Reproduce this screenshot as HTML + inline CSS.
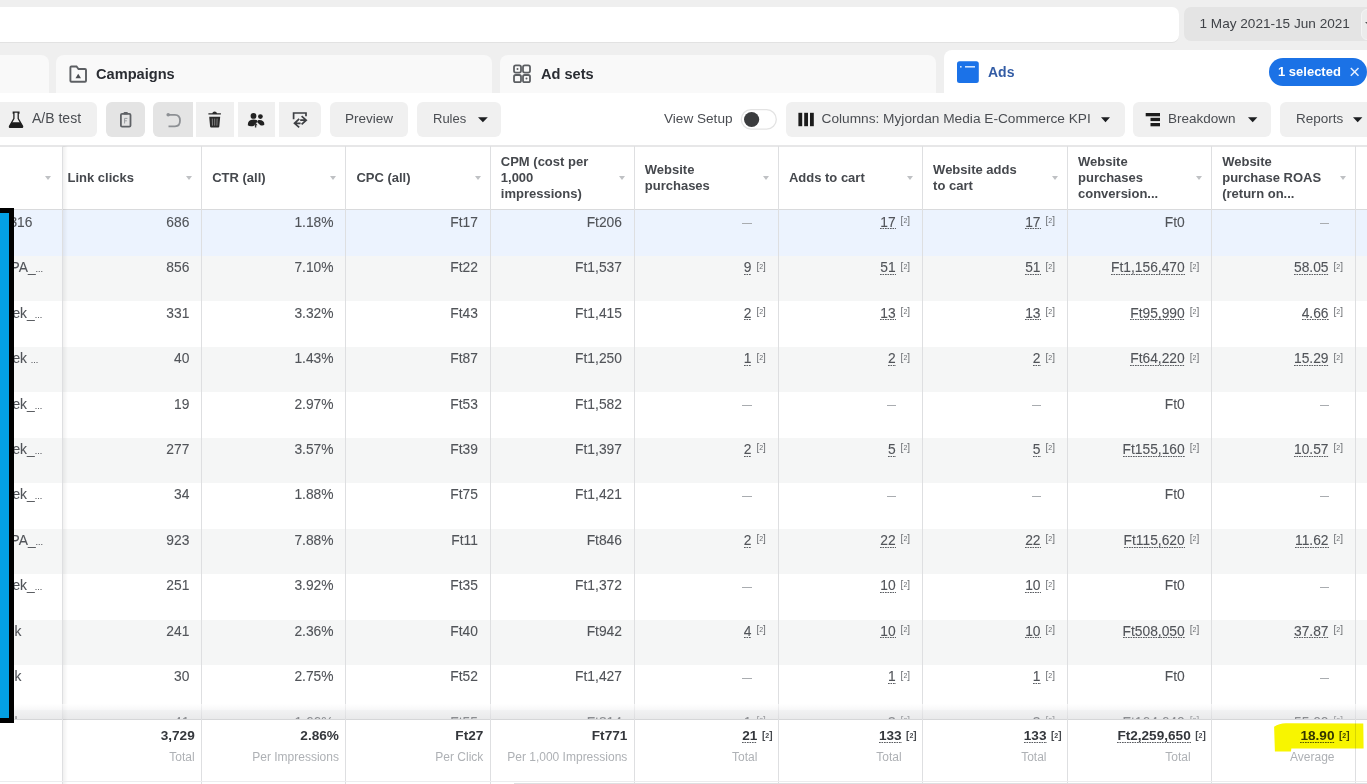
<!DOCTYPE html>
<html><head><meta charset="utf-8">
<style>
*{margin:0;padding:0;box-sizing:border-box}
html,body{width:1367px;height:784px;overflow:hidden;background:#fff;}
body{filter:blur(0.35px);font-family:"Liberation Sans",sans-serif;color:#444950}
.a{position:absolute}
#topbg{left:0;top:0;width:1367px;height:54px;background:#efefef}
#search{left:-10px;top:7px;width:1188.5px;height:35px;background:#fff;border-radius:7px;box-shadow:0 1px 0 #e2e2e2}
#date{left:1184px;top:7.3px;width:200px;height:34.2px;background:#e4e4e4;border-radius:7px;font-size:13.6px;color:#404348;padding:8.5px 0 0 15.5px;white-space:nowrap}
.tab{top:54.5px;height:38.5px;background:#f9f9f9;border-radius:8px 8px 0 0;font-size:14.6px;font-weight:bold;color:#2a2d33}
#tab0{left:-10px;width:59px}
#tab1{left:56px;width:436px}
#tab2{left:500px;width:436px}
#tab3{left:944px;top:50px;width:430px;height:46px;background:#fff}
#toolbar{left:0;top:93px;width:1367px;height:53px;background:#fff}
.btn{top:102px;height:35px;background:#f0f0f0;border-radius:6px;font-size:13.5px;color:#4a4d52;white-space:nowrap}
.btn span{position:absolute;top:9px}
.hd{position:absolute;font-size:13px;font-weight:bold;color:#45484d;line-height:16px;white-space:nowrap}
.rowbg{position:absolute;left:0;width:1367px}
.c small{font-size:9px}
.c{position:absolute;font-size:13.8px;color:#515459;white-space:nowrap;line-height:16px;-webkit-text-stroke:0.1px #515459}
.u{background-image:linear-gradient(to right,#5a5d62 60%,transparent 60%);background-size:2.5px 1.3px;background-repeat:repeat-x;background-position:0 13.7px}
.sup{position:absolute;font-size:10px;color:#6a6d71;line-height:10px;white-space:nowrap}
.sup small{font-size:7px;vertical-align:1px}
.dash{position:absolute;width:9.5px;height:1px;background:#a9acb0}
.vl{position:absolute;width:1px;background:#dedfe1}
.caret{position:absolute;width:0;height:0;border-left:3.5px solid transparent;border-right:3.5px solid transparent;border-top:4.5px solid #bfc1c4}
.dcaret{position:absolute;width:0;height:0;border-left:5px solid transparent;border-right:5px solid transparent;border-top:5px solid #1c1e21}
.ft{position:absolute;font-size:13.6px;font-weight:bold;color:#34373c;white-space:nowrap;line-height:16px}
.fl{position:absolute;font-size:12px;color:#aeb1b5;white-space:nowrap;line-height:14px}
</style></head><body>
<div class="a" id="topbg" style="height:93px"></div>
<div class="a" id="search"></div>
<div class="a" id="date">1 May 2021-15 Jun 2021</div>
<div class="a" style="left:1360.5px;top:9px;width:20px;height:31px;background:#ececec;border-radius:6px;border:1px solid #f4f4f4"></div>
<div class="a" style="left:1364.5px;top:22px;width:0;height:0;border-left:4px solid transparent;border-right:4px solid transparent;border-top:4px solid #555"></div>
<div class="a tab" id="tab0"></div>
<div class="a tab" id="tab1"><span class="a" style="left:40px;top:11px">Campaigns</span></div>
<div class="a tab" id="tab2"><span class="a" style="left:41px;top:11px">Ad sets</span></div>
<div class="a tab" id="tab3"><span class="a" style="left:44px;top:13.5px;color:#335ca5;font-size:14px">Ads</span></div>
<div class="a" style="left:1269.4px;top:58.4px;width:97.4px;height:27.4px;background:#1b72e6;border-radius:14px;color:#fff;font-size:13px;font-weight:bold;padding:5.3px 0 0 8.6px;white-space:nowrap">1 selected</div>
<div class="a" id="toolbar"></div>
<div class="a btn" style="left:-10px;width:107px"><span style="left:42px;font-size:14px;top:8.3px">A/B test</span></div>
<div class="a btn" style="left:106px;width:39px;background:#e4e4e4"></div>
<div class="a btn" style="left:153px;width:40px;background:#e4e4e4;border-radius:6px 0 0 6px"></div>
<div class="a btn" style="left:196px;width:38px;border-radius:0"></div>
<div class="a btn" style="left:238px;width:37px;border-radius:0"></div>
<div class="a btn" style="left:279px;width:42px;border-radius:0 6px 6px 0"></div>
<div class="a btn" style="left:330px;width:78px"><span style="left:15px">Preview</span></div>
<div class="a btn" style="left:417px;width:84px"><span style="left:16px;font-size:13px">Rules</span></div>
<div class="a" style="left:664px;top:111px;font-size:13.6px;color:#4a4d52;white-space:nowrap">View Setup</div>
<div class="a btn" style="left:786px;width:339px"><span style="left:35.5px;font-size:13.7px">Columns: Myjordan Media E-Commerce KPI</span></div>
<div class="a btn" style="left:1133px;width:138px"><span style="left:35px">Breakdown</span></div>
<div class="a btn" style="left:1280px;width:100px"><span style="left:16px">Reports</span></div>

<svg class="a" style="left:0;top:0" width="1367" height="146" viewBox="0 0 1367 146">
 <!-- campaigns folder -->
 <path d="M70.4 67.5 Q70.4 66.5 71.4 66.5 L76.5 66.5 L78.5 69 L85 69 Q86 69 86 70 L86 80.7 Q86 81.7 85 81.7 L71.4 81.7 Q70.4 81.7 70.4 80.7 Z" fill="none" stroke="#5c5f63" stroke-width="1.9"/>
 <path d="M75.5 78.3 L78.2 73.8 L81 78.3 Z" fill="#4a4d51"/>
 <!-- ad sets grid -->
 <rect x="514" y="65.4" width="7" height="7.2" rx="1.8" fill="none" stroke="#5c5f63" stroke-width="1.8"/>
 <rect x="523" y="65.4" width="7" height="7.2" rx="1.8" fill="none" stroke="#5c5f63" stroke-width="1.8"/>
 <rect x="514" y="75" width="7" height="7.2" rx="1.8" fill="none" stroke="#5c5f63" stroke-width="1.8"/>
 <rect x="523" y="75" width="7" height="7.2" rx="1.8" fill="none" stroke="#5c5f63" stroke-width="1.8"/>
 <circle cx="517.5" cy="69" r="1" fill="#5c5f63"/>
 <circle cx="526.5" cy="78.6" r="1" fill="#5c5f63"/>
 <!-- ads icon -->
 <rect x="957" y="61.2" width="21.8" height="21.8" rx="2.5" fill="#1b72e8"/>
 <rect x="960" y="66" width="1.6" height="1.6" fill="#cfe3ff"/>
 <rect x="965" y="66" width="10" height="1.6" fill="#cfe3ff"/>
 <!-- pill X -->
 <path d="M1350.8 68 L1358.5 75.7 M1358.5 68 L1350.8 75.7" stroke="#e3eeff" stroke-width="1.5"/>
 <!-- flask -->
 <path d="M13.3 112.2 L18.9 112.2 L18.9 113.2 L18.2 113.2 L18.2 118.5 L22.6 126.3 Q22.8 127.4 21.8 127.4 L10.2 127.4 Q9.2 127.4 9.5 126.3 L13.9 118.5 L13.9 113.2 L13.3 113.2 Z" fill="none" stroke="#222" stroke-width="1.3"/>
 <path d="M11.7 122.2 L20.4 122.2 L22.6 126.3 Q22.8 127.4 21.8 127.4 L10.2 127.4 Q9.2 127.4 9.5 126.3 Z" fill="#1e1e1e"/>
 <!-- clipboard -->
 <rect x="120.9" y="113.8" width="9.6" height="12.8" rx="1.2" fill="none" stroke="#5f6266" stroke-width="1.8"/>
 <rect x="123.6" y="112" width="4.2" height="2.6" rx="0.8" fill="#5f6266"/>
 <path d="M124.6 123.5 L124.6 118.4 L127.4 118.4 M124.6 120.8 L126.8 120.8" fill="none" stroke="#9a9da1" stroke-width="1"/>
 <!-- undo -->
 <path d="M168 114.8 L175 114.8 Q180 114.8 180 120.6 Q180 126.4 175 126.4 L168.5 126.4" fill="none" stroke="#8d9094" stroke-width="1.8"/>
 <circle cx="168.2" cy="114.8" r="1.8" fill="#8d9094"/>
 <!-- trash -->
 <path d="M208.4 113.2 L220.9 113.2 L220.9 114.6 L208.4 114.6 Z M212.3 113.2 Q212.6 111.6 214.6 111.6 Q216.6 111.6 217 113.2 Z" fill="#2a2a2a"/>
 <path d="M209.2 116.8 L220.2 116.8 L219.3 126.4 Q219.2 127.4 218.2 127.4 L211.2 127.4 Q210.2 127.4 210.1 126.4 Z" fill="#2a2a2a"/>
 <path d="M212.3 118.6 L212.5 125.6 M214.7 118.6 L214.7 125.6 M217.1 118.6 L216.9 125.6" stroke="#8a8a8a" stroke-width="0.9"/>
 <!-- group -->
 <circle cx="253.5" cy="115.9" r="2.9" fill="#222"/>
 <circle cx="260.4" cy="116.6" r="2.4" fill="#222"/>
 <path d="M247.8 125.2 Q247.6 119.8 253.4 119.6 Q257.2 119.8 257.9 121.4 L255.6 123.6 L253.6 126 Q249.6 127 247.8 125.2 Z" fill="#222"/>
 <path d="M258.3 120.1 Q264.3 119.6 264.4 124.6 Q263.6 126 260.4 125.3 L257.4 122.4 Z" fill="#222"/>
 <path d="M255.6 122.4 L257.5 125.2 L256.3 125.2 L256.3 127.6 L254.9 127.6 L254.9 125.2 L253.7 125.2 Z" fill="#333"/>
 <!-- share swap -->
 <path d="M293.6 119.2 L293.6 113 L306 113 L306 116.2" fill="none" stroke="#3d3f43" stroke-width="1.7"/>
 <path d="M299.2 118.8 L294.5 123.3 L299.2 127.3 M294.8 123.3 L300.6 123.3" fill="none" stroke="#3d3f43" stroke-width="1.7"/>
 <path d="M301.6 116.2 L306.2 120.2 L301.6 124.4 M305.8 120.2 L300.2 120.2" fill="none" stroke="#3d3f43" stroke-width="1.7"/>
 <!-- rules caret -->
 <path d="M478 117.3 L487.8 117.3 L482.9 122.3 Z" fill="#1c1e21"/>
 <!-- toggle -->
 <rect x="741.3" y="109.7" width="35" height="19.4" rx="9.7" fill="#fff" stroke="#e3e3e3" stroke-width="1.3"/>
 <circle cx="751.6" cy="119.5" r="7.6" fill="#3b3c3e"/>
 <!-- columns icon -->
 <rect x="798.4" y="112.8" width="3.8" height="13.4" fill="#1c1c1c"/>
 <rect x="804.2" y="112.8" width="3.8" height="13.4" fill="#1c1c1c"/>
 <rect x="810" y="112.8" width="3.8" height="13.4" fill="#1c1c1c"/>
 <path d="M1101 117.3 L1110 117.3 L1105.5 122.3 Z" fill="#1c1e21"/>
 <!-- breakdown icon -->
 <rect x="1145.7" y="113" width="14.3" height="3.3" fill="#1c1c1c"/>
 <rect x="1150.5" y="117.8" width="9.5" height="3.3" fill="#1c1c1c"/>
 <rect x="1150.5" y="123" width="9.5" height="3.3" fill="#1c1c1c"/>
 <path d="M1248 117.3 L1257.4 117.3 L1252.7 122.3 Z" fill="#1c1e21"/>
 <path d="M1353 117.3 L1362.4 117.3 L1357.7 122.3 Z" fill="#1c1e21"/>
</svg>
<svg class="a" style="left:0;top:140px" width="1367" height="60" viewBox="0 140 1367 60">
 <circle cx="1370.5" cy="176.3" r="5.6" fill="#4a7fb8"/>
</svg>

<div class="a" style="left:0;top:145.7px;width:1367px;height:638.3px;background:#fff"></div>
<div class="rowbg" style="top:208.9px;height:47.2px;background:#ecf3fe"></div>
<div class="rowbg" style="top:255.9px;height:45.8px;background:#f5f6f6"></div>
<div class="rowbg" style="top:301.3px;height:45.8px;background:#ffffff"></div>
<div class="rowbg" style="top:346.8px;height:45.8px;background:#f5f6f6"></div>
<div class="rowbg" style="top:392.2px;height:45.8px;background:#ffffff"></div>
<div class="rowbg" style="top:437.6px;height:45.8px;background:#f5f6f6"></div>
<div class="rowbg" style="top:483.1px;height:45.8px;background:#ffffff"></div>
<div class="rowbg" style="top:528.6px;height:45.8px;background:#f5f6f6"></div>
<div class="rowbg" style="top:574.0px;height:45.8px;background:#ffffff"></div>
<div class="rowbg" style="top:619.5px;height:45.8px;background:#f5f6f6"></div>
<div class="rowbg" style="top:664.9px;height:45.8px;background:#ffffff"></div>
<div class="rowbg" style="top:710.4px;height:45.8px;background:#f5f6f6"></div>
<div class="a" style="left:0;top:144.7px;width:1367px;height:2px;background:#e7e7e8"></div>
<div class="a" style="left:0;top:208.6px;width:1367px;height:1.6px;background:#d9dadc"></div>
<div class="c" style="left:9.4px;top:214.7px">316</div>
<div class="c" style="right:1177.7px;top:214.7px">686</div>
<div class="c" style="right:1033.5px;top:214.7px">1.18%</div>
<div class="c" style="right:889.1px;top:214.7px">Ft17</div>
<div class="c" style="right:745.1px;top:214.7px">Ft206</div>
<div class="dash" style="left:742.4px;top:223px"></div>
<div class="c u" style="right:471.4px;top:214.7px">17</div><div class="sup" style="left:900.6px;top:216.2px">[<small>2</small>]</div>
<div class="c u" style="right:326.5px;top:214.7px">17</div><div class="sup" style="left:1045.5px;top:216.2px">[<small>2</small>]</div>
<div class="c" style="right:182.3px;top:214.7px">Ft0</div>
<div class="dash" style="left:1319.5px;top:223px"></div>
<div class="c" style="left:10.5px;top:260.2px">PA_<small>...</small></div>
<div class="c" style="right:1177.7px;top:260.2px">856</div>
<div class="c" style="right:1033.5px;top:260.2px">7.10%</div>
<div class="c" style="right:889.1px;top:260.2px">Ft22</div>
<div class="c" style="right:745.1px;top:260.2px">Ft1,537</div>
<div class="c u" style="right:615.6px;top:260.2px">9</div><div class="sup" style="left:756.4px;top:261.7px">[<small>2</small>]</div>
<div class="c u" style="right:471.4px;top:260.2px">51</div><div class="sup" style="left:900.6px;top:261.7px">[<small>2</small>]</div>
<div class="c u" style="right:326.5px;top:260.2px">51</div><div class="sup" style="left:1045.5px;top:261.7px">[<small>2</small>]</div>
<div class="c u" style="right:182.3px;top:260.2px">Ft1,156,470</div><div class="sup" style="left:1189.7px;top:261.7px">[<small>2</small>]</div>
<div class="c u" style="right:38.5px;top:260.2px">58.05</div><div class="sup" style="left:1333.5px;top:261.7px">[<small>2</small>]</div>
<div class="c" style="left:12.4px;top:305.6px">ek_<small>...</small></div>
<div class="c" style="right:1177.7px;top:305.6px">331</div>
<div class="c" style="right:1033.5px;top:305.6px">3.32%</div>
<div class="c" style="right:889.1px;top:305.6px">Ft43</div>
<div class="c" style="right:745.1px;top:305.6px">Ft1,415</div>
<div class="c u" style="right:615.6px;top:305.6px">2</div><div class="sup" style="left:756.4px;top:307.1px">[<small>2</small>]</div>
<div class="c u" style="right:471.4px;top:305.6px">13</div><div class="sup" style="left:900.6px;top:307.1px">[<small>2</small>]</div>
<div class="c u" style="right:326.5px;top:305.6px">13</div><div class="sup" style="left:1045.5px;top:307.1px">[<small>2</small>]</div>
<div class="c u" style="right:182.3px;top:305.6px">Ft95,990</div><div class="sup" style="left:1189.7px;top:307.1px">[<small>2</small>]</div>
<div class="c u" style="right:38.5px;top:305.6px">4.66</div><div class="sup" style="left:1333.5px;top:307.1px">[<small>2</small>]</div>
<div class="c" style="left:12.4px;top:351.1px">ek <small>...</small></div>
<div class="c" style="right:1177.7px;top:351.1px">40</div>
<div class="c" style="right:1033.5px;top:351.1px">1.43%</div>
<div class="c" style="right:889.1px;top:351.1px">Ft87</div>
<div class="c" style="right:745.1px;top:351.1px">Ft1,250</div>
<div class="c u" style="right:615.6px;top:351.1px">1</div><div class="sup" style="left:756.4px;top:352.6px">[<small>2</small>]</div>
<div class="c u" style="right:471.4px;top:351.1px">2</div><div class="sup" style="left:900.6px;top:352.6px">[<small>2</small>]</div>
<div class="c u" style="right:326.5px;top:351.1px">2</div><div class="sup" style="left:1045.5px;top:352.6px">[<small>2</small>]</div>
<div class="c u" style="right:182.3px;top:351.1px">Ft64,220</div><div class="sup" style="left:1189.7px;top:352.6px">[<small>2</small>]</div>
<div class="c u" style="right:38.5px;top:351.1px">15.29</div><div class="sup" style="left:1333.5px;top:352.6px">[<small>2</small>]</div>
<div class="c" style="left:12.4px;top:396.5px">ek_<small>...</small></div>
<div class="c" style="right:1177.7px;top:396.5px">19</div>
<div class="c" style="right:1033.5px;top:396.5px">2.97%</div>
<div class="c" style="right:889.1px;top:396.5px">Ft53</div>
<div class="c" style="right:745.1px;top:396.5px">Ft1,582</div>
<div class="dash" style="left:742.4px;top:405px"></div>
<div class="dash" style="left:886.6px;top:405px"></div>
<div class="dash" style="left:1031.5px;top:405px"></div>
<div class="c" style="right:182.3px;top:396.5px">Ft0</div>
<div class="dash" style="left:1319.5px;top:405px"></div>
<div class="c" style="left:12.4px;top:441.9px">ek_<small>...</small></div>
<div class="c" style="right:1177.7px;top:441.9px">277</div>
<div class="c" style="right:1033.5px;top:441.9px">3.57%</div>
<div class="c" style="right:889.1px;top:441.9px">Ft39</div>
<div class="c" style="right:745.1px;top:441.9px">Ft1,397</div>
<div class="c u" style="right:615.6px;top:441.9px">2</div><div class="sup" style="left:756.4px;top:443.4px">[<small>2</small>]</div>
<div class="c u" style="right:471.4px;top:441.9px">5</div><div class="sup" style="left:900.6px;top:443.4px">[<small>2</small>]</div>
<div class="c u" style="right:326.5px;top:441.9px">5</div><div class="sup" style="left:1045.5px;top:443.4px">[<small>2</small>]</div>
<div class="c u" style="right:182.3px;top:441.9px">Ft155,160</div><div class="sup" style="left:1189.7px;top:443.4px">[<small>2</small>]</div>
<div class="c u" style="right:38.5px;top:441.9px">10.57</div><div class="sup" style="left:1333.5px;top:443.4px">[<small>2</small>]</div>
<div class="c" style="left:12.4px;top:487.4px">ek_<small>...</small></div>
<div class="c" style="right:1177.7px;top:487.4px">34</div>
<div class="c" style="right:1033.5px;top:487.4px">1.88%</div>
<div class="c" style="right:889.1px;top:487.4px">Ft75</div>
<div class="c" style="right:745.1px;top:487.4px">Ft1,421</div>
<div class="dash" style="left:742.4px;top:496px"></div>
<div class="dash" style="left:886.6px;top:496px"></div>
<div class="dash" style="left:1031.5px;top:496px"></div>
<div class="c" style="right:182.3px;top:487.4px">Ft0</div>
<div class="dash" style="left:1319.5px;top:496px"></div>
<div class="c" style="left:10.5px;top:532.9px">PA_<small>...</small></div>
<div class="c" style="right:1177.7px;top:532.9px">923</div>
<div class="c" style="right:1033.5px;top:532.9px">7.88%</div>
<div class="c" style="right:889.1px;top:532.9px">Ft11</div>
<div class="c" style="right:745.1px;top:532.9px">Ft846</div>
<div class="c u" style="right:615.6px;top:532.9px">2</div><div class="sup" style="left:756.4px;top:534.4px">[<small>2</small>]</div>
<div class="c u" style="right:471.4px;top:532.9px">22</div><div class="sup" style="left:900.6px;top:534.4px">[<small>2</small>]</div>
<div class="c u" style="right:326.5px;top:532.9px">22</div><div class="sup" style="left:1045.5px;top:534.4px">[<small>2</small>]</div>
<div class="c u" style="right:182.3px;top:532.9px">Ft115,620</div><div class="sup" style="left:1189.7px;top:534.4px">[<small>2</small>]</div>
<div class="c u" style="right:38.5px;top:532.9px">11.62</div><div class="sup" style="left:1333.5px;top:534.4px">[<small>2</small>]</div>
<div class="c" style="left:12.4px;top:578.3px">ek_<small>...</small></div>
<div class="c" style="right:1177.7px;top:578.3px">251</div>
<div class="c" style="right:1033.5px;top:578.3px">3.92%</div>
<div class="c" style="right:889.1px;top:578.3px">Ft35</div>
<div class="c" style="right:745.1px;top:578.3px">Ft1,372</div>
<div class="dash" style="left:742.4px;top:587px"></div>
<div class="c u" style="right:471.4px;top:578.3px">10</div><div class="sup" style="left:900.6px;top:579.8px">[<small>2</small>]</div>
<div class="c u" style="right:326.5px;top:578.3px">10</div><div class="sup" style="left:1045.5px;top:579.8px">[<small>2</small>]</div>
<div class="c" style="right:182.3px;top:578.3px">Ft0</div>
<div class="dash" style="left:1319.5px;top:587px"></div>
<div class="c" style="left:14.6px;top:623.8px">k</div>
<div class="c" style="right:1177.7px;top:623.8px">241</div>
<div class="c" style="right:1033.5px;top:623.8px">2.36%</div>
<div class="c" style="right:889.1px;top:623.8px">Ft40</div>
<div class="c" style="right:745.1px;top:623.8px">Ft942</div>
<div class="c u" style="right:615.6px;top:623.8px">4</div><div class="sup" style="left:756.4px;top:625.2px">[<small>2</small>]</div>
<div class="c u" style="right:471.4px;top:623.8px">10</div><div class="sup" style="left:900.6px;top:625.2px">[<small>2</small>]</div>
<div class="c u" style="right:326.5px;top:623.8px">10</div><div class="sup" style="left:1045.5px;top:625.2px">[<small>2</small>]</div>
<div class="c u" style="right:182.3px;top:623.8px">Ft508,050</div><div class="sup" style="left:1189.7px;top:625.2px">[<small>2</small>]</div>
<div class="c u" style="right:38.5px;top:623.8px">37.87</div><div class="sup" style="left:1333.5px;top:625.2px">[<small>2</small>]</div>
<div class="c" style="left:14.6px;top:669.2px">k</div>
<div class="c" style="right:1177.7px;top:669.2px">30</div>
<div class="c" style="right:1033.5px;top:669.2px">2.75%</div>
<div class="c" style="right:889.1px;top:669.2px">Ft52</div>
<div class="c" style="right:745.1px;top:669.2px">Ft1,427</div>
<div class="dash" style="left:742.4px;top:678px"></div>
<div class="c u" style="right:471.4px;top:669.2px">1</div><div class="sup" style="left:900.6px;top:670.7px">[<small>2</small>]</div>
<div class="c u" style="right:326.5px;top:669.2px">1</div><div class="sup" style="left:1045.5px;top:670.7px">[<small>2</small>]</div>
<div class="c" style="right:182.3px;top:669.2px">Ft0</div>
<div class="dash" style="left:1319.5px;top:678px"></div>
<div class="c" style="left:14.6px;top:714.6px">k</div>
<div class="c" style="right:1177.7px;top:714.6px">41</div>
<div class="c" style="right:1033.5px;top:714.6px">1.66%</div>
<div class="c" style="right:889.1px;top:714.6px">Ft55</div>
<div class="c" style="right:745.1px;top:714.6px">Ft814</div>
<div class="c u" style="right:615.6px;top:714.6px">1</div><div class="sup" style="left:756.4px;top:716.1px">[<small>2</small>]</div>
<div class="c u" style="right:471.4px;top:714.6px">3</div><div class="sup" style="left:900.6px;top:716.1px">[<small>2</small>]</div>
<div class="c u" style="right:326.5px;top:714.6px">3</div><div class="sup" style="left:1045.5px;top:716.1px">[<small>2</small>]</div>
<div class="c u" style="right:182.3px;top:714.6px">Ft164,640</div><div class="sup" style="left:1189.7px;top:716.1px">[<small>2</small>]</div>
<div class="c u" style="right:38.5px;top:714.6px">55.00</div><div class="sup" style="left:1333.5px;top:716.1px">[<small>2</small>]</div>
<div class="vl" style="left:61.5px;top:145.7px;height:638.3px;width:1px"></div>
<div class="vl" style="left:201.2px;top:145.7px;height:638.3px;width:1px"></div>
<div class="vl" style="left:345.4px;top:145.7px;height:638.3px;width:1px"></div>
<div class="vl" style="left:489.8px;top:145.7px;height:638.3px;width:1px"></div>
<div class="vl" style="left:633.8px;top:145.7px;height:638.3px;width:1px"></div>
<div class="vl" style="left:777.9px;top:145.7px;height:638.3px;width:1px"></div>
<div class="vl" style="left:922.1px;top:145.7px;height:638.3px;width:1px"></div>
<div class="vl" style="left:1067.0px;top:145.7px;height:638.3px;width:1px"></div>
<div class="vl" style="left:1211.2px;top:145.7px;height:638.3px;width:1px"></div>
<div class="vl" style="left:1355.0px;top:145.7px;height:638.3px;width:1px"></div>
<div class="a" style="left:62.5px;top:145.7px;height:638.3px;width:5px;background:linear-gradient(to right,rgba(0,0,0,0.06),rgba(0,0,0,0))"></div>
<div class="hd" style="left:67.5px;top:169.6px">Link clicks</div>
<div class="caret" style="left:186.0px;top:175.8px"></div>
<div class="hd" style="left:212.2px;top:169.6px">CTR (all)</div>
<div class="caret" style="left:330.2px;top:175.8px"></div>
<div class="hd" style="left:356.4px;top:169.6px">CPC (all)</div>
<div class="caret" style="left:474.6px;top:175.8px"></div>
<div class="hd" style="left:500.8px;top:153.6px">CPM (cost per<br>1,000<br>impressions)</div>
<div class="caret" style="left:618.6px;top:175.8px"></div>
<div class="hd" style="left:644.8px;top:161.6px">Website<br>purchases</div>
<div class="caret" style="left:762.7px;top:175.8px"></div>
<div class="hd" style="left:788.9px;top:169.6px">Adds to cart</div>
<div class="caret" style="left:906.9px;top:175.8px"></div>
<div class="hd" style="left:933.1px;top:161.6px">Website adds<br>to cart</div>
<div class="caret" style="left:1051.8px;top:175.8px"></div>
<div class="hd" style="left:1078.0px;top:153.6px">Website<br>purchases<br>conversion...</div>
<div class="caret" style="left:1196.0px;top:175.8px"></div>
<div class="hd" style="left:1222.2px;top:153.6px">Website<br>purchase ROAS<br>(return on...</div>
<div class="caret" style="left:1339.8px;top:175.8px"></div>
<div class="caret" style="left:45px;top:176px"></div>
<div class="a" style="left:0;top:704.3px;width:1367px;height:15px;background:linear-gradient(to bottom,rgba(255,255,255,0.6),rgba(235,235,237,0.5) 50%,rgba(215,215,218,0.4))"></div>
<div class="a" style="left:0;top:719.3px;width:1367px;height:64.70000000000005px;background:#fff;border-top:1px solid #d5d6d8"></div>
<div class="vl" style="left:61.5px;top:719.3px;height:64.70000000000005px;width:1px"></div>
<div class="vl" style="left:201.2px;top:719.3px;height:64.70000000000005px;width:1px"></div>
<div class="vl" style="left:345.4px;top:719.3px;height:64.70000000000005px;width:1px"></div>
<div class="vl" style="left:489.8px;top:719.3px;height:64.70000000000005px;width:1px"></div>
<div class="vl" style="left:633.8px;top:719.3px;height:64.70000000000005px;width:1px"></div>
<div class="vl" style="left:777.9px;top:719.3px;height:64.70000000000005px;width:1px"></div>
<div class="vl" style="left:922.1px;top:719.3px;height:64.70000000000005px;width:1px"></div>
<div class="vl" style="left:1067.0px;top:719.3px;height:64.70000000000005px;width:1px"></div>
<div class="vl" style="left:1211.2px;top:719.3px;height:64.70000000000005px;width:1px"></div>
<div class="vl" style="left:1355.0px;top:719.3px;height:64.70000000000005px;width:1px"></div>
<div class="a" style="left:62.5px;top:719.3px;height:64.70000000000005px;width:5px;background:linear-gradient(to right,rgba(0,0,0,0.06),rgba(0,0,0,0))"></div>
<div class="ft" style="right:1172.3px;top:728.3px">3,729</div>
<div class="fl" style="right:1172.3px;top:749.5px">Total</div>
<div class="ft" style="right:1028.1px;top:728.3px">2.86%</div>
<div class="fl" style="right:1028.1px;top:749.5px">Per Impressions</div>
<div class="ft" style="right:883.7px;top:728.3px">Ft27</div>
<div class="fl" style="right:883.7px;top:749.5px">Per Click</div>
<div class="ft" style="right:739.7px;top:728.3px">Ft771</div>
<div class="fl" style="right:739.7px;top:749.5px">Per 1,000 Impressions</div>
<div class="ft u" style="right:609.6px;top:728.3px">21</div>
<div class="sup" style="left:761.9px;top:731.3px;font-weight:bold;color:#45484d">[<small>2</small>]</div>
<div class="fl" style="right:609.6px;top:749.5px">Total</div>
<div class="ft u" style="right:465.4px;top:728.3px">133</div>
<div class="sup" style="left:906.1px;top:731.3px;font-weight:bold;color:#45484d">[<small>2</small>]</div>
<div class="fl" style="right:465.4px;top:749.5px">Total</div>
<div class="ft u" style="right:320.5px;top:728.3px">133</div>
<div class="sup" style="left:1051.0px;top:731.3px;font-weight:bold;color:#45484d">[<small>2</small>]</div>
<div class="fl" style="right:320.5px;top:749.5px">Total</div>
<div class="ft u" style="right:176.3px;top:728.3px">Ft2,259,650</div>
<div class="sup" style="left:1195.2px;top:731.3px;font-weight:bold;color:#45484d">[<small>2</small>]</div>
<div class="fl" style="right:176.3px;top:749.5px">Total</div>
<div class="ft u" style="right:32.5px;top:728.3px">18.90</div>
<div class="sup" style="left:1339.0px;top:731.3px;font-weight:bold;color:#45484d">[<small>2</small>]</div>
<div class="fl" style="right:32.5px;top:749.5px">Average</div>
<div class="a" style="left:0;top:781px;width:1367px;height:1px;background:#ececee"></div>
<div class="a" style="left:514px;top:782.5px;width:853px;height:2px;background:#dedfe1"></div>
<svg class="a" style="left:0;top:0;mix-blend-mode:multiply" width="1367" height="784"><path d="M1274.1 726.7 Q1279 723.2 1285.8 723.2 L1363.3 723.6 L1363.6 748.6 L1291.3 748.6 L1291 751.4 L1274.9 751.4 Z" fill="#f8f500"/></svg>
<div class="a" style="left:-5px;top:208px;width:19px;height:514.5px;background:#03a0e4;border:5px solid #000"></div>
</body></html>
